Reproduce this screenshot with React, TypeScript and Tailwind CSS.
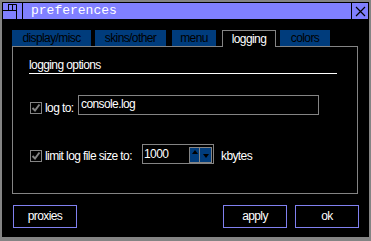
import React from "react";

const tabs: Array<{ label: string; w: string; ml: string; active?: boolean }> = [
  { label: "display/misc", w: "w-[79px]", ml: "ml-0" },
  { label: "skins/other", w: "w-[71px]", ml: "ml-[4px]" },
  { label: "menu", w: "w-[44px]", ml: "ml-[6px]" },
  { label: "logging", w: "w-[54px]", ml: "ml-[6px]", active: true },
  { label: "colors", w: "w-[50px]", ml: "ml-[4px]" },
];

const Check = () => (
  <div className="w-[12px] h-[12px] border border-[#848484] bg-black flex items-center justify-center">
    <svg width="10" height="10" viewBox="0 0 10 10">
      <path d="M1.5 5 L4 7.5 L8.5 1.5" stroke="#848484" strokeWidth="2" fill="none" />
    </svg>
  </div>
);

const Button = ({ text, className = "" }: { text: string; className?: string }) => (
  <div
    className={`w-[64px] h-[23px] border border-[#8080f0] flex items-center justify-center text-white ${className}`}
  >
    {text}
  </div>
);

const App = () => {
  return (
    <div className="w-[371px] h-[241px] bg-[#848484] px-[2px] pt-[2px] pb-[4px] font-['Liberation_Sans',Arial,sans-serif] text-[12px] tracking-[-0.6px] leading-[15px]">
      <div className="h-full bg-black flex flex-col">
        {/* title bar */}
        <div className="mx-[1px] mt-[1px] h-[16px] bg-[#8080ff] flex">
          <div className="w-[20px] h-full border-r border-black">
            <svg width="19" height="16" viewBox="0 0 19 16">
              <path
                d="M5 1.5 H13.5 V7.5 M5.5 1 V7.5 M0 7.5 H13.5 M13.5 7 V16 M9.5 1 V7"
                stroke="#000"
                strokeWidth="1"
                fill="none"
              />
            </svg>
          </div>
          <div className="flex-1 pl-[8px] font-['Liberation_Mono',monospace] text-[13px] tracking-normal leading-[16px] text-white">
            preferences
          </div>
          <div className="w-[17px] h-full border-l border-black flex items-center justify-center">
            <svg width="11" height="11" viewBox="0 0 11 11">
              <path d="M1 1 L10 10 M10 1 L1 10" stroke="#000" strokeWidth="1.2" />
            </svg>
          </div>
        </div>

        {/* tabs */}
        <div className="ml-[10px] mt-[11px] h-[16px] flex items-start">
          {tabs.map((t) =>
            t.active ? (
              <div
                key={t.label}
                className={`${t.w} ${t.ml} h-[17px] relative z-10 bg-black border-t border-x border-[#848484] text-white text-center leading-[16px]`}
              >
                {t.label}
              </div>
            ) : (
              <div
                key={t.label}
                className={`${t.w} ${t.ml} h-[16px] bg-[#003c7c] text-black text-center leading-[17px]`}
              >
                {t.label}
              </div>
            )
          )}
        </div>

        {/* panel */}
        <div className="ml-[10px] w-[346px] h-[148px] border border-[#848484] pl-[16px] text-white">
          <div className="mt-[11px] w-[308px] h-[16px] border-b border-white">logging options</div>

          <div className="mt-[21px] flex items-start">
            <div className="ml-[1px] mt-[7px]">
              <Check />
            </div>
            <div className="ml-[3px] mt-[6px] w-[33px] whitespace-nowrap">log to:</div>
            <div className="w-[241px] h-[20px] border border-[#848484] pl-[2px] pt-[1px]">console.log</div>
          </div>

          <div className="mt-[28px] flex items-start">
            <div className="ml-[1px] mt-[6px]">
              <Check />
            </div>
            <div className="ml-[3px] mt-[5px] w-[97px] whitespace-nowrap">limit log file size to:</div>
            <div className="w-[72px] h-[20px] border border-[#848484] flex">
              <div className="flex-1 pl-[1px] pt-[2px]">1000</div>
              <div className="mt-[2px] mr-[1px] w-[23px] h-[16px] border border-[#848484] flex">
                <div className="w-[10px] h-full bg-[#003c7c] border-r border-[#848484] flex justify-center pt-[2px]">
                  <svg width="6" height="4" viewBox="0 0 6 4">
                    <path d="M0 4 L3 0 L6 4 Z" fill="#000" />
                  </svg>
                </div>
                <div className="flex-1 h-full bg-[#003c7c] flex justify-center items-end pb-[4px]">
                  <svg width="6" height="4" viewBox="0 0 6 4">
                    <path d="M0 0 L6 0 L3 4 Z" fill="#000" />
                  </svg>
                </div>
              </div>
            </div>
            <div className="ml-[7px] mt-[5px]">kbytes</div>
          </div>
        </div>

        {/* buttons */}
        <div className="mt-[11px] ml-[11px] flex">
          <Button text="proxies" />
          <Button text="apply" className="ml-[146px]" />
          <Button text="ok" className="ml-[8px]" />
        </div>
      </div>
    </div>
  );
};

export default App;
